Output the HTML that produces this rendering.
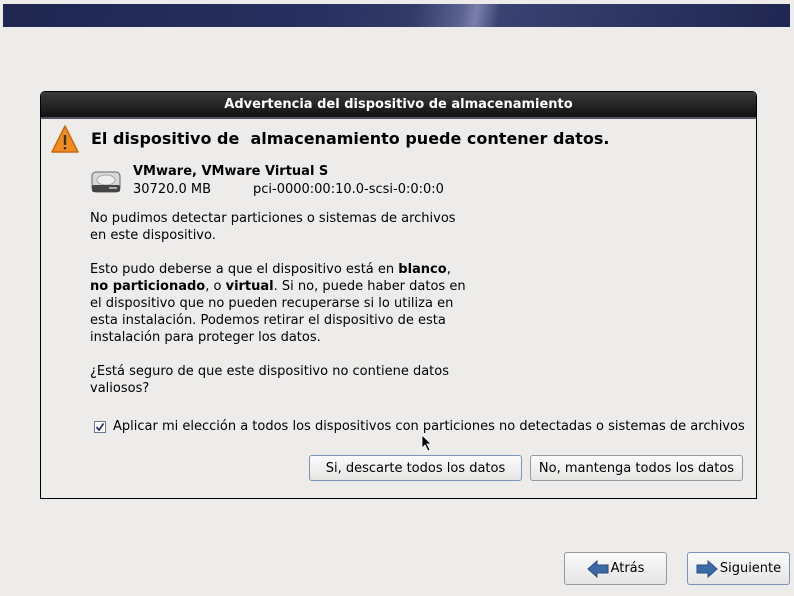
<!DOCTYPE html>
<html><head><meta charset="utf-8"><style>
body{margin:0;width:794px;height:596px;background:#edeceb;font-family:"DejaVu Sans","Liberation Sans",sans-serif;font-size:13px;color:#000;position:relative;overflow:hidden}
.ban{position:absolute;left:3px;top:4px;width:787px;height:23px;background:linear-gradient(100deg,#1f2650 0%,#283060 40%,#323a68 52%,#5a6090 58%,#7a80a8 60%,#3a4272 63%,#1f2650 100%)}
.dlg{position:absolute;left:40px;top:91px;width:715px;height:406px;border:1px solid #000;border-radius:5px 5px 0 0;background:#edeceb}
.tt{height:25px;background:linear-gradient(#3a3a3a,#111);border-radius:4px 4px 0 0;color:#fff;font-weight:bold;font-size:13px;text-align:center;line-height:25px;border-bottom:2px solid #556}
.a{position:absolute;white-space:nowrap}
.btn{position:absolute;height:26px;border:1px solid #999;border-radius:3px;background:linear-gradient(#fbfbfb,#e6e5e4);text-align:center;line-height:26px;font-size:13px;box-sizing:border-box}
.foc{border-color:#7a93b8}
</style></head><body>
<div class="ban"></div>
<div class="dlg"><div class="tt">Advertencia del dispositivo de almacenamiento</div></div>
<svg class="a" style="left:50px;top:124px" width="30" height="30" viewBox="0 0 30 30"><path d="M15 2 L28 28 L2 28 Z" fill="#f28c1e" stroke="#c66a10" stroke-width="1.5" stroke-linejoin="round"/><rect x="13.8" y="11" width="2.4" height="10" fill="#333"/><rect x="13.8" y="23" width="2.4" height="2.4" fill="#333"/></svg>
<div class="a" style="left:91px;top:129px;font-weight:bold;font-size:16px">El dispositivo de&nbsp; almacenamiento puede contener datos.</div>
<svg class="a" style="left:91px;top:170px" width="30" height="24" viewBox="0 0 30 24"><rect x="1" y="2" width="28" height="20" rx="4" fill="#d8d8d8" stroke="#666"/><ellipse cx="15" cy="10" rx="9" ry="5" fill="#eee" stroke="#aaa"/><rect x="1" y="15" width="28" height="7" rx="2" fill="#444"/><rect x="18" y="17" width="8" height="2" fill="#aaa"/></svg>
<div class="a" style="left:133px;top:164px;font-weight:bold">VMware, VMware Virtual S</div>
<div class="a" style="left:133px;top:182px">30720.0 MB</div>
<div class="a" style="left:253px;top:182px">pci-0000:00:10.0-scsi-0:0:0:0</div>
<div class="a" style="left:90px;top:210px;line-height:17px">No pudimos detectar particiones o sistemas de archivos<br>en este dispositivo.</div>
<div class="a" style="left:90px;top:261px;line-height:17px">Esto pudo deberse a que el dispositivo está en <b>blanco</b>,<br><b>no particionado</b>, o <b>virtual</b>. Si no, puede haber datos en<br>el dispositivo que no pueden recuperarse si lo utiliza en<br>esta instalación. Podemos retirar el dispositivo de esta<br>instalación para proteger los datos.</div>
<div class="a" style="left:90px;top:363px;line-height:17px">¿Está seguro de que este dispositivo no contiene datos<br>valiosos?</div>
<svg class="a" style="left:94px;top:421px" width="12" height="12"><rect x="0.5" y="0.5" width="11" height="11" fill="#fff" stroke="#6a7a95"/><path d="M2.5 6 L5 9 L9.5 2.5" stroke="#2a3a60" stroke-width="1.8" fill="none"/></svg>
<div class="a" style="left:113px;top:419px">Aplicar mi elección a todos los dispositivos con particiones no detectadas o sistemas de archivos</div>
<div class="btn foc" style="left:309px;top:455px;width:213px">Si, descarte todos los datos</div>
<div class="btn" style="left:530px;top:455px;width:213px">No, mantenga todos los datos</div>
<div class="btn" style="left:564px;top:552px;width:103px;height:33px;line-height:31px"><svg style="vertical-align:middle;margin-right:2px" width="22" height="18" viewBox="0 0 22 18"><path d="M1 9 L10 1 V5 H21 V13 H10 V17 Z" fill="#3a6aa8" stroke="#2a4a80"/></svg>Atrás</div>
<div class="btn foc" style="left:687px;top:552px;width:103px;height:33px;line-height:31px"><svg style="vertical-align:middle;margin-right:2px" width="22" height="18" viewBox="0 0 22 18"><path d="M21 9 L12 1 V5 H1 V13 H12 V17 Z" fill="#3a6aa8" stroke="#2a4a80"/></svg>Siguiente</div>
<svg class="a" style="left:421px;top:434px" width="12" height="18"><path d="M1 1 L1 14 L4 11 L7 17 L9 16 L6 10 L10 10 Z" fill="#000" stroke="#fff" stroke-width="0.8"/></svg>
</body></html>
